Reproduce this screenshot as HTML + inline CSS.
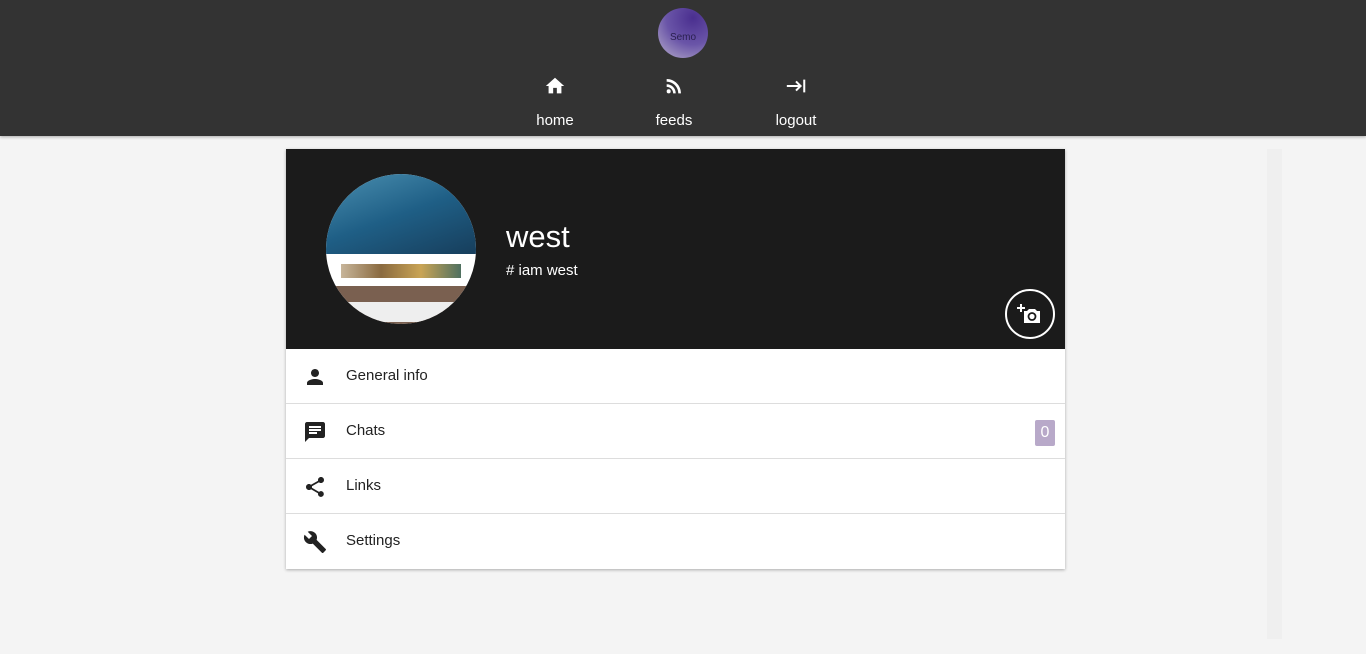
<!DOCTYPE html>
<html><head><style>
*{margin:0;padding:0;box-sizing:border-box}
body{width:1366px;height:654px;background:#f4f4f4;font-family:"Liberation Sans",sans-serif;position:relative;overflow:hidden}
.top{position:absolute;left:0;top:0;width:1366px;height:136px;background:#333;box-shadow:0 1px 3px rgba(0,0,0,.3)}
.logo{position:absolute;left:658px;top:8px;width:50px;height:50px;border-radius:50%;background:radial-gradient(circle at 70% 20%,#4a2f8f,#6a55a8 50%,#b9b0cc 100%);color:#2a2050;font-size:10px;text-align:center;line-height:60px}
.nav{position:absolute;top:75px;color:#fff;font-size:15px;text-align:center}
.nav svg{display:block;margin:0 auto 15px}
.card{position:absolute;left:286px;top:149px;width:779px;height:420px;background:#fff;box-shadow:0 1px 3px rgba(0,0,0,.3)}
.hd{height:200px;background:#1b1b1b;position:relative}
.av{position:absolute;left:40px;top:25px;width:150px;height:150px;border-radius:50%;overflow:hidden;background:#fff}
.name{position:absolute;left:220px;top:70px;color:#fff;font-size:31px}
.tag{position:absolute;left:220px;top:113px;color:#fff;font-size:15px}
.cam{position:absolute;left:719px;top:140px;width:50px;height:50px;border-radius:50%;border:2px solid #fff}
.row{height:55px;border-bottom:1px solid #ddd;position:relative;font-size:15px;color:#222}
.row:last-child{border-bottom:none}
.row span{position:absolute;left:60px;top:18px}
.row svg{position:absolute;left:17px;top:16px}
.badge{position:absolute;right:10px;top:16px;width:20px;height:26px;background:#b8a9c9;color:#fff;font-size:16px;text-align:center;line-height:26px;border-radius:2px}
.sb{position:absolute;left:1267px;top:149px;width:15px;height:490px;background:#efefef}
</style></head><body>
<div class="top">
<div class="logo">Semo</div>
<div class="nav" style="left:535px;width:40px"><svg width="22" height="22" viewBox="0 0 24 24"><path fill="#fff" d="M10 20v-6h4v6h5v-8h3L12 3 2 12h3v8z"/></svg>home</div>
<div class="nav" style="left:652px;width:44px"><svg width="22" height="22" viewBox="0 0 24 24"><circle cx="6.2" cy="17.8" r="2.2" fill="#fff"/><path fill="#fff" d="M4 4.4v2.9c7 0 12.7 5.7 12.7 12.7h2.9C19.6 11.4 12.6 4.4 4 4.4zm0 5.7v2.8c3.9 0 7.1 3.2 7.1 7.1h2.8c0-5.5-4.4-9.9-9.9-9.9z"/></svg>feeds</div>
<div class="nav" style="left:772px;width:48px"><svg width="24" height="22" viewBox="0 0 24 24"><path d="M2 12h15M12 7l5 5-5 5M21 5v14" stroke="#fff" stroke-width="2.2" fill="none"/></svg>logout</div>
</div>
<div class="card">
<div class="hd">
<div class="av">
<div style="height:80px;background:linear-gradient(160deg,#4a8fb0,#1f5f86 50%,#173e5c)"></div>
<div style="position:absolute;left:15px;top:90px;width:120px;height:14px;background:linear-gradient(90deg,#c7b59a,#8a6a40,#c9a455,#4f7060)"></div>
<div style="position:absolute;left:0;top:112px;width:150px;height:40px;background:#7a6050"></div>
<div style="position:absolute;left:15px;top:128px;width:120px;height:20px;background:#eee"></div>
</div>
<div class="name">west</div>
<div class="tag"># iam west</div>
<div class="cam"><svg width="26" height="24" viewBox="0 0 26 24" style="position:absolute;left:10px;top:11px"><path d="M4 2v8M0 6h8" stroke="#fff" stroke-width="2"/><path fill="#fff" d="M7 9h3l2-2h6l2 2h3v12H7z"/><circle cx="15" cy="14.5" r="3.5" fill="none" stroke="#1b1b1b" stroke-width="1.8"/></svg></div>
</div>
<div class="row"><svg width="24" height="24" viewBox="0 0 24 24"><path fill="#222" d="M12 12c2.2 0 4-1.8 4-4s-1.8-4-4-4-4 1.8-4 4 1.8 4 4 4zm0 2c-2.7 0-8 1.3-8 4v2h16v-2c0-2.7-5.3-4-8-4z"/></svg><span>General info</span></div>
<div class="row"><svg width="24" height="24" viewBox="0 0 24 24"><path fill="#222" d="M20 2H4c-1.1 0-2 .9-2 2v18l4-4h14c1.1 0 2-.9 2-2V4c0-1.1-.9-2-2-2zM6 9h12v2H6zm8 5H6v-2h8zm4-6H6V6h12z"/></svg><span>Chats</span><div class="badge">0</div></div>
<div class="row"><svg width="24" height="24" viewBox="0 0 24 24"><path fill="#222" d="M18 16.1c-.8 0-1.4.3-2 .8l-7.1-4.2c.1-.2.1-.5.1-.7s0-.5-.1-.7L16 7.2c.5.5 1.2.8 2 .8 1.7 0 3-1.3 3-3s-1.3-3-3-3-3 1.3-3 3c0 .2 0 .5.1.7L8 9.8C7.5 9.3 6.8 9 6 9c-1.7 0-3 1.3-3 3s1.3 3 3 3c.8 0 1.5-.3 2-.8l7.1 4.2c-.1.2-.1.4-.1.6 0 1.6 1.3 2.9 2.9 2.9s2.9-1.3 2.9-2.9-1.2-2.9-2.8-2.9z"/></svg><span>Links</span></div>
<div class="row"><svg width="24" height="24" viewBox="0 0 24 24"><path fill="#222" d="M22.7 19l-9.1-9.1c.9-2.3.4-5-1.5-6.9-2-2-5-2.4-7.4-1.3L9 6 6 9 1.6 4.7C.4 7.1.9 10.1 2.9 12.1c1.9 1.9 4.6 2.4 6.9 1.5l9.1 9.1c.4.4 1 .4 1.4 0l2.3-2.3c.5-.4.5-1.1.1-1.4z"/></svg><span>Settings</span></div>
</div>
<div class="sb"></div>
</body></html>
